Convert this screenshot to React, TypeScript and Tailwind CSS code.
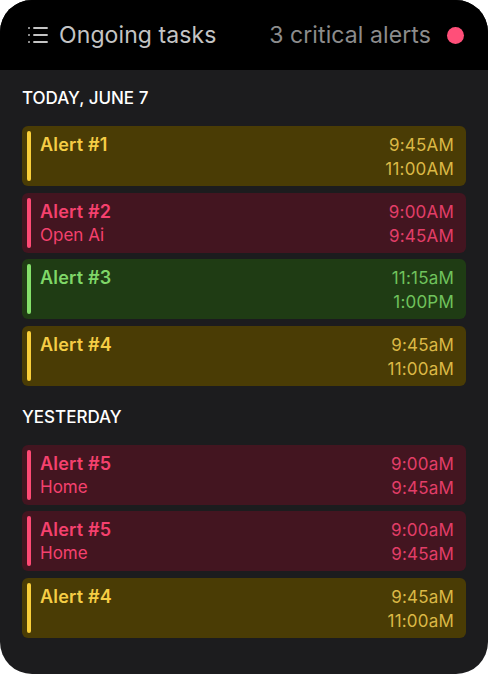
import { List } from "lucide-react";

type Tone = "yellow" | "pink" | "green";

interface Alert {
    title: string;
    sub?: string;
    start: string;
    end: string;
    tone: Tone;
}

const tones = {
    yellow: { card: "bg-[#4a3c05]", bar: "bg-[#f9cf3a]", title: "text-[#f5cd45]", time: "text-[#dbb845]" },
    pink: { card: "bg-[#431520]", bar: "bg-[#ff4a75]", title: "text-[#f5416e]", time: "text-[#e23e68]" },
    green: { card: "bg-[#1f3c14]", bar: "bg-[#84e06a]", title: "text-[#7fd768]", time: "text-[#6fc35c]" },
};

const today: Alert[] = [
    { title: "Alert #1", start: "9:45AM", end: "11:00AM", tone: "yellow" },
    { title: "Alert #2", sub: "Open Ai", start: "9:00AM", end: "9:45AM", tone: "pink" },
    { title: "Alert #3", start: "11:15aM", end: "1:00PM", tone: "green" },
    { title: "Alert #4", start: "9:45aM", end: "11:00aM", tone: "yellow" },
];

const yesterday: Alert[] = [
    { title: "Alert #5", sub: "Home", start: "9:00aM", end: "9:45aM", tone: "pink" },
    { title: "Alert #5", sub: "Home", start: "9:00aM", end: "9:45aM", tone: "pink" },
    { title: "Alert #4", start: "9:45aM", end: "11:00aM", tone: "yellow" },
];

function AlertCard({ alert }: { alert: Alert }) {
    const t = tones[alert.tone];
    return (
        <div className={`flex h-[60px] rounded-md p-[5px] ${t.card}`}>
            <div className={`w-[4px] rounded-full ${t.bar}`} />
            <div className="flex flex-1 justify-between pl-[9px] pr-[7px] pt-[2px]">
                <div className="flex flex-col">
                    <span className={`text-[18px] font-semibold leading-[24px] tracking-[0.2px] ${t.title}`}>{alert.title}</span>
                    {alert.sub && <span className={`text-[17px] leading-[22px] ${t.title}`}>{alert.sub}</span>}
                </div>
                <div className={`flex flex-col items-end text-[17px] leading-[24px] tracking-[0.2px] ${t.time}`}>
                    <span>{alert.start}</span>
                    <span>{alert.end}</span>
                </div>
            </div>
        </div>
    );
}

function Section({ label, alerts }: { label: string; alerts: Alert[] }) {
    return (
        <div className="flex flex-col">
            <h3 className="mb-[18px] text-[17px] font-medium leading-[20px] text-white">{label}</h3>
            <div className="flex flex-col gap-[6.5px]">
                {alerts.map((a, i) => (
                    <AlertCard key={i} alert={a} />
                ))}
            </div>
        </div>
    );
}

export default function App() {
    return (
        <div className="h-[674px] w-[488px] bg-white" style={{ fontFamily: "Inter, 'Noto Sans', sans-serif" }}>
            <div className="flex h-full flex-col overflow-hidden rounded-[32px] bg-[#1c1c1e]">
                <header className="flex h-[70px] shrink-0 items-center justify-between bg-black pl-[26px] pr-[24px]">
                    <div className="flex items-center gap-[9px] text-[#c4c4c4]">
                        <List size={24} strokeWidth={1.9} />
                        <span className="text-[23px] leading-none tracking-[0.1px]">Ongoing tasks</span>
                    </div>
                    <div className="flex items-center gap-[16px]">
                        <span className="text-[23px] leading-none tracking-[0.1px] text-[#8c8c8c]">3 critical alerts</span>
                        <span className="h-[17px] w-[17px] rounded-full bg-[#ff4f79]" />
                    </div>
                </header>
                <main className="flex flex-col gap-[21px] px-[22px] pt-[18px]">
                    <Section label="TODAY, JUNE 7" alerts={today} />
                    <Section label="YESTERDAY" alerts={yesterday} />
                </main>
            </div>
        </div>
    );
}
